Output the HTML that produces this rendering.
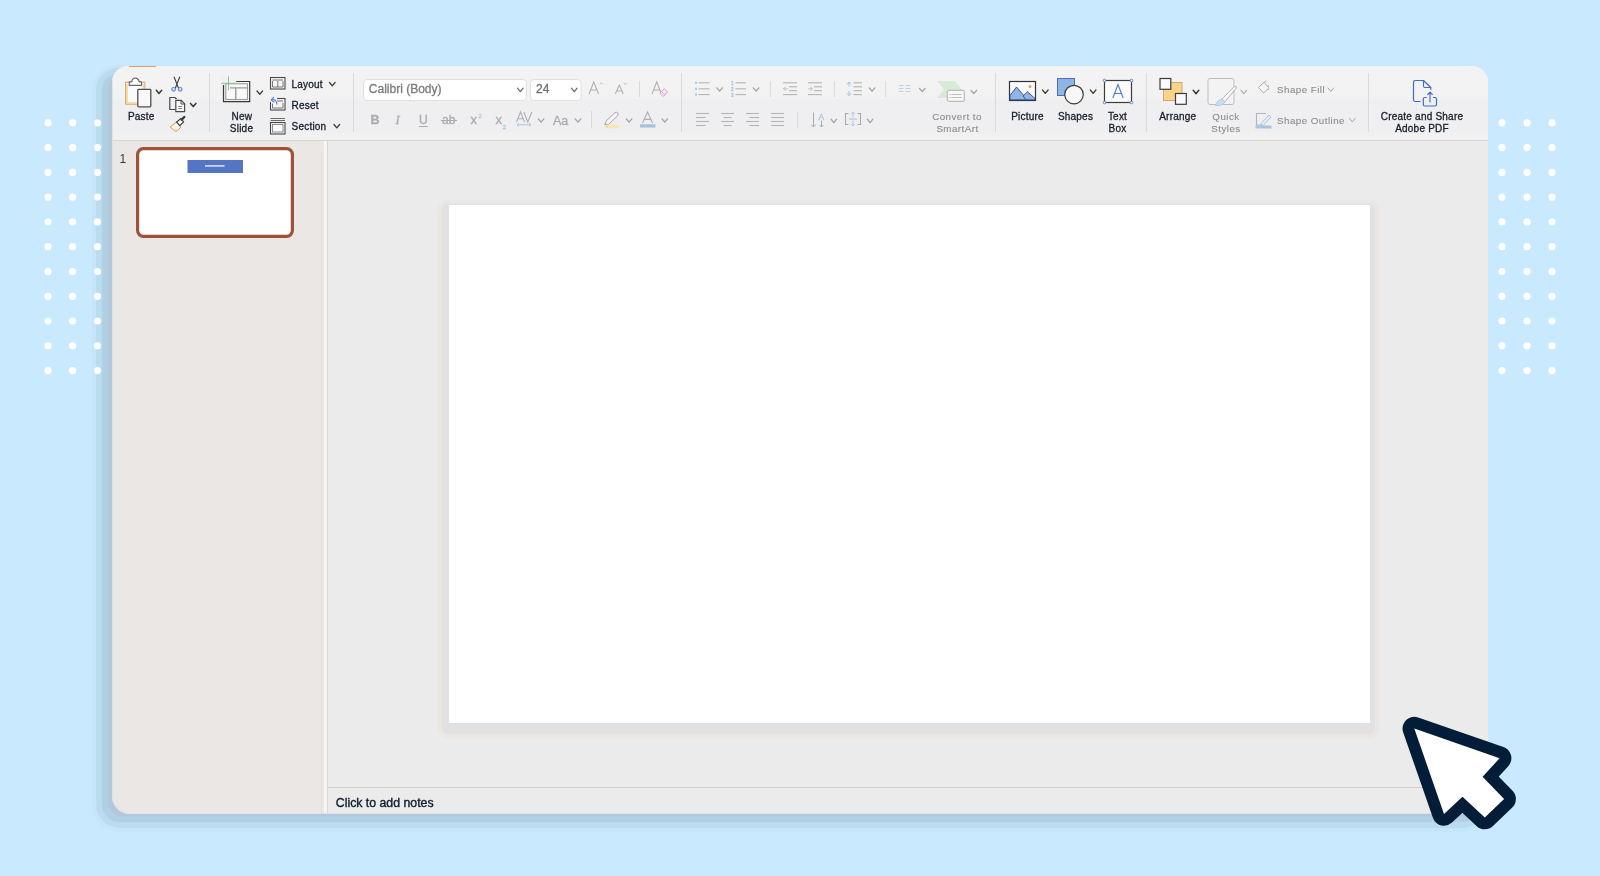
<!DOCTYPE html>
<html><head><meta charset="utf-8"><style>
*{margin:0;padding:0;box-sizing:border-box}
html,body{width:1600px;height:876px;overflow:hidden;background:#C9E9FE;font-family:"Liberation Sans",sans-serif}
#shadow{position:absolute;left:112px;top:66px;width:1376px;height:748px;border-radius:16px 16px 16px 18px;box-shadow:-8px 6px 0.8px -4px #B3C7D8,-10.25px 7.75px 0.8px -0.25px #B0D0E6,-9.5px 8px 0.8px 6px #BBDBEE,-10.75px 8.25px 1px 9.25px #C5E6FA}
#win{position:absolute;left:112px;top:66px;width:1376px;height:748px;border-radius:16px 16px 16px 18px;overflow:hidden;background:#EBEBEB}
#ribbon{position:absolute;left:0;top:0;width:1376px;height:75px;background:linear-gradient(#F3F3F3 0,#F2F2F2 33px,#EFEFF2 34px,#EFEFF2 66px,#F1F1F2 67px,#F1F1F2 100%);border-bottom:1px solid #D5D5D5}
#tabline{position:absolute;left:17px;top:0;width:27px;height:1px;background:#DCA270}
#left{position:absolute;left:0;top:75px;width:212px;height:673px;background:#EAE7E4}
#sepw{position:absolute;left:212px;top:75px;width:3px;height:673px;background:#F8F6F5}
#main{position:absolute;left:215px;top:75px;width:1161px;height:673px;background:#EBEBEB;border-left:1px solid #D6D6D6}
#slide{position:absolute;left:121px;top:64px;width:921px;height:518px;background:#fff}
#slsh{position:absolute;left:114px;top:62.5px;width:933px;height:530px;border-radius:6px;background:#E1E1E1;box-shadow:0 0 2px 3.5px #EAE6E3}
#edge{position:absolute;left:0;top:0;width:1376px;height:748px;border-radius:16px 16px 16px 18px;box-shadow:inset 1px -1px 0 #DDE3E9}
#notesline{position:absolute;left:0;top:646px;width:1161px;height:1px;background:#D3D0CD}
</style></head><body>
<div id="shadow"></div>
<svg class="full" width="1600" height="876" viewBox="0 0 1600 876" style="position:absolute;left:0;top:0"><circle cx="48" cy="122.8" r="3.6" fill="#fff"/><circle cx="48" cy="147.6" r="3.6" fill="#fff"/><circle cx="48" cy="172.4" r="3.6" fill="#fff"/><circle cx="48" cy="197.1" r="3.6" fill="#fff"/><circle cx="48" cy="221.9" r="3.6" fill="#fff"/><circle cx="48" cy="246.7" r="3.6" fill="#fff"/><circle cx="48" cy="271.5" r="3.6" fill="#fff"/><circle cx="48" cy="296.3" r="3.6" fill="#fff"/><circle cx="48" cy="321.0" r="3.6" fill="#fff"/><circle cx="48" cy="345.8" r="3.6" fill="#fff"/><circle cx="48" cy="370.6" r="3.6" fill="#fff"/><circle cx="72.6" cy="122.8" r="3.6" fill="#fff"/><circle cx="72.6" cy="147.6" r="3.6" fill="#fff"/><circle cx="72.6" cy="172.4" r="3.6" fill="#fff"/><circle cx="72.6" cy="197.1" r="3.6" fill="#fff"/><circle cx="72.6" cy="221.9" r="3.6" fill="#fff"/><circle cx="72.6" cy="246.7" r="3.6" fill="#fff"/><circle cx="72.6" cy="271.5" r="3.6" fill="#fff"/><circle cx="72.6" cy="296.3" r="3.6" fill="#fff"/><circle cx="72.6" cy="321.0" r="3.6" fill="#fff"/><circle cx="72.6" cy="345.8" r="3.6" fill="#fff"/><circle cx="72.6" cy="370.6" r="3.6" fill="#fff"/><circle cx="97.5" cy="122.8" r="3.6" fill="#fff"/><circle cx="97.5" cy="147.6" r="3.6" fill="#fff"/><circle cx="97.5" cy="172.4" r="3.6" fill="#fff"/><circle cx="97.5" cy="197.1" r="3.6" fill="#fff"/><circle cx="97.5" cy="221.9" r="3.6" fill="#fff"/><circle cx="97.5" cy="246.7" r="3.6" fill="#fff"/><circle cx="97.5" cy="271.5" r="3.6" fill="#fff"/><circle cx="97.5" cy="296.3" r="3.6" fill="#fff"/><circle cx="97.5" cy="321.0" r="3.6" fill="#fff"/><circle cx="97.5" cy="345.8" r="3.6" fill="#fff"/><circle cx="97.5" cy="370.6" r="3.6" fill="#fff"/><circle cx="1502" cy="122.8" r="3.6" fill="#fff"/><circle cx="1502" cy="147.6" r="3.6" fill="#fff"/><circle cx="1502" cy="172.4" r="3.6" fill="#fff"/><circle cx="1502" cy="197.1" r="3.6" fill="#fff"/><circle cx="1502" cy="221.9" r="3.6" fill="#fff"/><circle cx="1502" cy="246.7" r="3.6" fill="#fff"/><circle cx="1502" cy="271.5" r="3.6" fill="#fff"/><circle cx="1502" cy="296.3" r="3.6" fill="#fff"/><circle cx="1502" cy="321.0" r="3.6" fill="#fff"/><circle cx="1502" cy="345.8" r="3.6" fill="#fff"/><circle cx="1502" cy="370.6" r="3.6" fill="#fff"/><circle cx="1527" cy="122.8" r="3.6" fill="#fff"/><circle cx="1527" cy="147.6" r="3.6" fill="#fff"/><circle cx="1527" cy="172.4" r="3.6" fill="#fff"/><circle cx="1527" cy="197.1" r="3.6" fill="#fff"/><circle cx="1527" cy="221.9" r="3.6" fill="#fff"/><circle cx="1527" cy="246.7" r="3.6" fill="#fff"/><circle cx="1527" cy="271.5" r="3.6" fill="#fff"/><circle cx="1527" cy="296.3" r="3.6" fill="#fff"/><circle cx="1527" cy="321.0" r="3.6" fill="#fff"/><circle cx="1527" cy="345.8" r="3.6" fill="#fff"/><circle cx="1527" cy="370.6" r="3.6" fill="#fff"/><circle cx="1552" cy="122.8" r="3.6" fill="#fff"/><circle cx="1552" cy="147.6" r="3.6" fill="#fff"/><circle cx="1552" cy="172.4" r="3.6" fill="#fff"/><circle cx="1552" cy="197.1" r="3.6" fill="#fff"/><circle cx="1552" cy="221.9" r="3.6" fill="#fff"/><circle cx="1552" cy="246.7" r="3.6" fill="#fff"/><circle cx="1552" cy="271.5" r="3.6" fill="#fff"/><circle cx="1552" cy="296.3" r="3.6" fill="#fff"/><circle cx="1552" cy="321.0" r="3.6" fill="#fff"/><circle cx="1552" cy="345.8" r="3.6" fill="#fff"/><circle cx="1552" cy="370.6" r="3.6" fill="#fff"/></svg>
<div id="win">
  <div id="ribbon"><div id="tabline"></div></div>
  <div id="left"><div style="position:absolute;left:209px;top:10px;width:1px;height:663px;background:#E4E1DE"></div></div>
  <div id="sepw"></div>
  <div id="main">
    <div id="slsh"></div><div id="slide"></div>
    <div id="notesline"></div>
  </div>
  <div id="edge"></div>
</div>
<svg class="full" width="1600" height="876" viewBox="0 0 1600 876" style="position:absolute;left:0;top:0;font-family:'Liberation Sans',sans-serif;will-change:transform"><rect x="125.6" y="82.2" width="19.2" height="22" fill="#FAFAFA" stroke="#D9A070" stroke-width="1"/><path d="M127 84 V103 H137" fill="none" stroke="#F6D68E" stroke-width="1.6"/><path d="M143.4 84 V89" fill="none" stroke="#F6D68E" stroke-width="1.4"/><path d="M129.3 85.3 V81.8 H131.8 A3.6 3.6 0 0 1 139 81.8 H141.5 V85.3 Z" fill="#fff" stroke="#6a6a6a" stroke-width="1.2" stroke-linejoin="round"/><rect x="137.8" y="89.3" width="13" height="17.5" fill="#F8F8F8" stroke="#4f4f4f" stroke-width="1.3" rx="0.8"/><path d="M156.3 90.3 L159.0 93.5 L161.70000000000002 90.3" fill="none" stroke="#3a3a3a" stroke-width="1.5" stroke-linecap="round" stroke-linejoin="round"/><text x="141.3" y="119.6" font-size="10.0" fill="#161D29" text-anchor="middle" font-weight="normal" stroke="#161D29" stroke-width="0.3" letter-spacing="0.22" >Paste</text><path d="M174 76.7 L178.6 88.5 M179.8 76.7 L175.2 88.5" stroke="#3c3c3c" stroke-width="1.1" fill="none"/><circle cx="173.6" cy="89.3" r="1.8" fill="#D7E6F9" stroke="#5A8AD8" stroke-width="1.1"/><circle cx="180.2" cy="89.3" r="1.8" fill="#D7E6F9" stroke="#5A8AD8" stroke-width="1.1"/><path d="M175.5 109.5 H169.8 V97.5 H175 L176.5 99" fill="none" stroke="#4a4a4a" stroke-width="1.2"/><path d="M175.8 100.3 H181.2 L184.6 103.7 V111.6 H175.8 Z" fill="#fafafa" stroke="#4a4a4a" stroke-width="1.2"/><path d="M181 100.5 V104 H184.5" fill="none" stroke="#4a4a4a" stroke-width="1"/><path d="M178.3 106.5 H182.2 M178.3 108.6 H182.2" stroke="#777" stroke-width="0.9"/><path d="M190.5 103.4 L193.2 106.60000000000001 L195.9 103.4" fill="none" stroke="#3a3a3a" stroke-width="1.5" stroke-linecap="round" stroke-linejoin="round"/><path d="M170.2 127 L176.8 121.8 L180.8 127.2 L176 132 Z" fill="#FBF4E4" stroke="#D9925A" stroke-width="1" stroke-linejoin="round"/><path d="M173 129.5 L176 132 L178.8 129.2 Z" fill="#F6D68E"/><path d="M176.6 122.2 L180.6 118.6 L183.6 121.8 L179.8 125.6 Z" fill="#FAFAFA" stroke="#3a3a3a" stroke-width="1.2" stroke-linejoin="round"/><path d="M181.6 119.6 L184.3 117" stroke="#3a3a3a" stroke-width="2.4" stroke-linecap="round"/><line x1="209.5" y1="73" x2="209.5" y2="132" stroke="#DADADA" stroke-width="1"/><rect x="225.8" y="83.8" width="21.6" height="15.6" fill="#F8F8F8" stroke="#8a8a8a" stroke-width="0.9"/><path d="M230 87.9 H247.4 M235.8 88 V99.4" stroke="#9a9a9a" stroke-width="1.4" fill="none"/><path d="M236.2 81.5 H249.7 V101.6 H223.5 V85" fill="none" stroke="#3a3a3a" stroke-width="1.2"/><rect x="220" y="75" width="9" height="8" fill="#F1F1F1"/><path d="M228.5 76.4 V90.3 M221.2 83.3 H235.8" stroke="#8FBF9A" stroke-width="1"/><path d="M257 91 L259.8 94.4 L262.6 91" fill="none" stroke="#3a3a3a" stroke-width="1.25" stroke-linecap="round" stroke-linejoin="round"/><text x="241.8" y="120" font-size="10.0" fill="#161D29" text-anchor="middle" font-weight="normal" stroke="#161D29" stroke-width="0.3" letter-spacing="0.22" >New</text><text x="241.5" y="131.5" font-size="10.0" fill="#161D29" text-anchor="middle" font-weight="normal" stroke="#161D29" stroke-width="0.3" letter-spacing="0.22" >Slide</text><rect x="270.5" y="77.5" width="14.5" height="11.5" fill="#f4f4f4" stroke="#4a4a4a" stroke-width="1.1"/><path d="M272.5 80 H283 M272.5 81 V87 H283 V81 M277.8 81 V87" fill="none" stroke="#6a6a6a" stroke-width="0.9"/><text x="291.5" y="88" font-size="10.0" fill="#161D29" text-anchor="start" font-weight="normal" stroke="#161D29" stroke-width="0.3" letter-spacing="0.22" >Layout</text><path d="M329.5 82.5 L332.3 85.9 L335.1 82.5" fill="none" stroke="#3a3a3a" stroke-width="1.25" stroke-linecap="round" stroke-linejoin="round"/><rect x="270.5" y="98.5" width="14.5" height="11.5" fill="#f4f4f4" stroke="#4a4a4a" stroke-width="1.1"/><path d="M275 101 H283 M272.5 103.5 V108 H283 V103" fill="none" stroke="#6a6a6a" stroke-width="0.9"/><rect x="269" y="96" width="8" height="6" fill="#F1F1F3"/><path d="M271.5 100 Q276.5 98.5 277 104.5" fill="none" stroke="#5A8AD8" stroke-width="1.2"/><path d="M273.5 97.3 L271.2 100 L274 102" fill="none" stroke="#5A8AD8" stroke-width="1.2" stroke-linejoin="round" stroke-linecap="round"/><text x="291.5" y="108.7" font-size="10.0" fill="#161D29" text-anchor="start" font-weight="normal" stroke="#161D29" stroke-width="0.3" letter-spacing="0.22" >Reset</text><path d="M270.5 118.5 H285 M270.5 120.5 H285" stroke="#6a6a6a" stroke-width="1"/><rect x="270.5" y="122.5" width="14.5" height="11.5" fill="#f4f4f4" stroke="#4a4a4a" stroke-width="1.1"/><rect x="272.5" y="124.5" width="10.5" height="7.5" fill="#fbfbfb" stroke="#777" stroke-width="0.8"/><text x="291.5" y="129.8" font-size="10.0" fill="#161D29" text-anchor="start" font-weight="normal" stroke="#161D29" stroke-width="0.3" letter-spacing="0.22" >Section</text><path d="M334 124.5 L336.8 127.9 L339.6 124.5" fill="none" stroke="#3a3a3a" stroke-width="1.25" stroke-linecap="round" stroke-linejoin="round"/><line x1="353.5" y1="73" x2="353.5" y2="132" stroke="#DADADA" stroke-width="1"/><rect x="363.5" y="79.5" width="163" height="21" rx="3.5" fill="#fff" stroke="#E0E0E0" stroke-width="1"/><text x="368.8" y="92.8" font-size="12" fill="#7B7B7B" text-anchor="start" font-weight="normal" stroke="#7B7B7B" stroke-width="0.3" >Calibri (Body)</text><path d="M517.5 88.2 L520.3 91.60000000000001 L523.1 88.2" fill="none" stroke="#6a6a6a" stroke-width="1.25" stroke-linecap="round" stroke-linejoin="round"/><rect x="530.5" y="79.5" width="50.5" height="21" rx="3.5" fill="#fff" stroke="#E0E0E0" stroke-width="1"/><text x="536" y="93" font-size="12" fill="#6f6f6f" text-anchor="start" font-weight="normal" stroke="#6f6f6f" stroke-width="0.3" >24</text><path d="M571.5 88.2 L574.3 91.60000000000001 L577.1 88.2" fill="none" stroke="#6a6a6a" stroke-width="1.25" stroke-linecap="round" stroke-linejoin="round"/><path d="M589 94 L593.75 82 L598.5 94 M590.9 90.04 H596.6" fill="none" stroke="#AFAFAF" stroke-width="1.05" stroke-linejoin="miter"/><path d="M599.6 84.6 L601.4 82.6 L603.2 84.6" fill="none" stroke="#BDBDBD" stroke-width="0.9"/><path d="M615.3 94 L619.3 85 L623.3 94 M616.9 91.03 H621.6999999999999" fill="none" stroke="#AFAFAF" stroke-width="1.05" stroke-linejoin="miter"/><path d="M623.8 82.8 L625.4 84.6 L627 82.8" fill="none" stroke="#A7C3E6" stroke-width="0.9"/><line x1="639.5" y1="81" x2="639.5" y2="97" stroke="#DADADA" stroke-width="1"/><path d="M652 94 L656.75 82 L661.5 94 M653.9 90.04 H659.6" fill="none" stroke="#AFAFAF" stroke-width="1.05" stroke-linejoin="miter"/><path d="M659.8 93.2 L664.3 88.7 L667.6 92 L663.1 96.5 Z" fill="#F5E6F3" stroke="#CFA6D4" stroke-width="1"/><path d="M661.5 91.5 L665.3 95.3" stroke="#CFA6D4" stroke-width="0.8"/><text x="370.5" y="124.3" font-size="12.5" fill="#ABABAB" text-anchor="start" font-weight="bold" stroke="#ABABAB" stroke-width="0.3" >B</text><text x="395.5" y="124.3" font-size="12.5" fill="#ABABAB" text-anchor="start" font-weight="normal" stroke="#ABABAB" stroke-width="0.3" font-style="italic" font-family="Liberation Serif">I</text><text x="419" y="123.8" font-size="12" fill="#ABABAB" text-anchor="start" font-weight="normal" stroke="#ABABAB" stroke-width="0.3" >U</text><line x1="419" y1="126.5" x2="428" y2="126.5" stroke="#ABABAB" stroke-width="1"/><text x="442" y="124.3" font-size="12" fill="#ABABAB" text-anchor="start" font-weight="normal" stroke="#ABABAB" stroke-width="0.3" >ab</text><line x1="441" y1="120.5" x2="457" y2="120.5" stroke="#ABABAB" stroke-width="1"/><text x="470.5" y="124.3" font-size="13" fill="#ABABAB" text-anchor="start" font-weight="normal" stroke="#ABABAB" stroke-width="0.3" >x</text><text x="478.5" y="117.5" font-size="6" fill="#C8C8C8" text-anchor="start" font-weight="normal" stroke="#C8C8C8" stroke-width="0.3" >2</text><text x="495.5" y="124.3" font-size="13" fill="#ABABAB" text-anchor="start" font-weight="normal" stroke="#ABABAB" stroke-width="0.3" >x</text><text x="502.8" y="128.5" font-size="6" fill="#A7C3E6" text-anchor="start" font-weight="normal" stroke="#A7C3E6" stroke-width="0.3" >2</text><path d="M516.5 122 L520.5 112 L524.5 122 M518.1 118.7 H522.9" fill="none" stroke="#AFAFAF" stroke-width="1.05" stroke-linejoin="miter"/><path d="M523.8 112 L527.8 122 L531.8 112" fill="none" stroke="#AFAFAF" stroke-width="1.05"/><path d="M517 124.8 H531 M517 124.8 L519 123 M517 124.8 L519 126.6 M531 124.8 L529 123 M531 124.8 L529 126.6" fill="none" stroke="#A7C3E6" stroke-width="0.9"/><path d="M538.3 118.8 L541.0999999999999 122.2 L543.9 118.8" fill="none" stroke="#A0A0A0" stroke-width="1.25" stroke-linecap="round" stroke-linejoin="round"/><text x="553" y="124.5" font-size="12.5" fill="#ABABAB" text-anchor="start" font-weight="normal" stroke="#ABABAB" stroke-width="0.3" >Aa</text><path d="M575.2 118.8 L578.0 122.2 L580.8000000000001 118.8" fill="none" stroke="#A0A0A0" stroke-width="1.25" stroke-linecap="round" stroke-linejoin="round"/><line x1="591.5" y1="111" x2="591.5" y2="128" stroke="#DADADA" stroke-width="1"/><path d="M604.8 124.5 L606.2 121 L614.8 112.8 Q616.6 111.6 617.8 113 Q618.6 114.6 617.4 116 L608.8 124.2 Z" fill="#F6F6F6" stroke="#A5A5A5" stroke-width="1" stroke-linejoin="round"/><ellipse cx="611.8" cy="126.4" rx="8.2" ry="2" fill="#F6E6B8"/><rect x="606.5" y="126.3" width="1" height="1" fill="#E6B24A"/><path d="M626.3 118.8 L629.0999999999999 122.2 L631.9 118.8" fill="none" stroke="#A0A0A0" stroke-width="1.25" stroke-linecap="round" stroke-linejoin="round"/><path d="M642.5 123 L647.5 112 L652.5 123 M644.5 119.37 H650.5" fill="none" stroke="#AFAFAF" stroke-width="1.05" stroke-linejoin="miter"/><rect x="640" y="124.3" width="15.5" height="3.2" fill="#A5C0DC"/><path d="M662 118.8 L664.8 122.2 L667.6 118.8" fill="none" stroke="#A0A0A0" stroke-width="1.25" stroke-linecap="round" stroke-linejoin="round"/><line x1="681.5" y1="73" x2="681.5" y2="132" stroke="#DADADA" stroke-width="1"/><rect x="695" y="81.8" width="2" height="2" fill="#A7C3E6"/><rect x="695" y="87.8" width="2" height="2" fill="#A7C3E6"/><rect x="695" y="93.6" width="2" height="2" fill="#A7C3E6"/><line x1="698.5" y1="82.8" x2="709.5" y2="82.8" stroke="#B5B5B5" stroke-width="1.1"/><line x1="698.5" y1="88.8" x2="709.5" y2="88.8" stroke="#B5B5B5" stroke-width="1.1"/><line x1="698.5" y1="94.6" x2="709.5" y2="94.6" stroke="#B5B5B5" stroke-width="1.1"/><path d="M716.8 87.8 L719.5999999999999 91.2 L722.4 87.8" fill="none" stroke="#A0A0A0" stroke-width="1.25" stroke-linecap="round" stroke-linejoin="round"/><text x="731" y="85" font-size="4.5" fill="#A7C3E6" text-anchor="start" font-weight="normal" stroke="#A7C3E6" stroke-width="0.3" >1</text><text x="731" y="91" font-size="4.5" fill="#A7C3E6" text-anchor="start" font-weight="normal" stroke="#A7C3E6" stroke-width="0.3" >2</text><text x="731" y="96.5" font-size="4.5" fill="#A7C3E6" text-anchor="start" font-weight="normal" stroke="#A7C3E6" stroke-width="0.3" >3</text><line x1="735.5" y1="82.8" x2="746.0" y2="82.8" stroke="#B5B5B5" stroke-width="1.1"/><line x1="735.5" y1="88.8" x2="746.0" y2="88.8" stroke="#B5B5B5" stroke-width="1.1"/><line x1="735.5" y1="94.6" x2="746.0" y2="94.6" stroke="#B5B5B5" stroke-width="1.1"/><path d="M753.3 87.8 L756.0999999999999 91.2 L758.9 87.8" fill="none" stroke="#A0A0A0" stroke-width="1.25" stroke-linecap="round" stroke-linejoin="round"/><line x1="770.5" y1="81" x2="770.5" y2="97" stroke="#DADADA" stroke-width="1"/><line x1="783" y1="82.8" x2="797" y2="82.8" stroke="#B5B5B5" stroke-width="1.1"/><line x1="783" y1="94.6" x2="797" y2="94.6" stroke="#B5B5B5" stroke-width="1.1"/><line x1="789" y1="86.8" x2="797" y2="86.8" stroke="#B5B5B5" stroke-width="1.1"/><line x1="789" y1="90.7" x2="797" y2="90.7" stroke="#B5B5B5" stroke-width="1.1"/><path d="M788 88.8 H783.5 M785.5 86.8 L783.5 88.8 L785.5 90.8" fill="none" stroke="#A7C3E6" stroke-width="1"/><line x1="808" y1="82.8" x2="822" y2="82.8" stroke="#B5B5B5" stroke-width="1.1"/><line x1="808" y1="94.6" x2="822" y2="94.6" stroke="#B5B5B5" stroke-width="1.1"/><line x1="814" y1="86.8" x2="822" y2="86.8" stroke="#B5B5B5" stroke-width="1.1"/><line x1="814" y1="90.7" x2="822" y2="90.7" stroke="#B5B5B5" stroke-width="1.1"/><path d="M808 88.8 H812.5 M810.5 86.8 L812.5 88.8 L810.5 90.8" fill="none" stroke="#A7C3E6" stroke-width="1"/><line x1="834.5" y1="81" x2="834.5" y2="97" stroke="#DADADA" stroke-width="1"/><path d="M849 82 V86.5 M846.8 84.3 L849 82 L851.2 84.3 M849 91 V95.5 M846.8 93.2 L849 95.5 L851.2 93.2" fill="none" stroke="#A7C3E6" stroke-width="1"/><line x1="853.5" y1="82.8" x2="862.0" y2="82.8" stroke="#B5B5B5" stroke-width="1.1"/><line x1="853.5" y1="86.8" x2="862.0" y2="86.8" stroke="#B5B5B5" stroke-width="1.1"/><line x1="853.5" y1="90.7" x2="862.0" y2="90.7" stroke="#B5B5B5" stroke-width="1.1"/><line x1="853.5" y1="94.6" x2="862.0" y2="94.6" stroke="#B5B5B5" stroke-width="1.1"/><path d="M869.3 87.8 L872.0999999999999 91.2 L874.9 87.8" fill="none" stroke="#A0A0A0" stroke-width="1.25" stroke-linecap="round" stroke-linejoin="round"/><line x1="885.5" y1="81" x2="885.5" y2="97" stroke="#DADADA" stroke-width="1"/><line x1="899" y1="85.5" x2="903.5" y2="85.5" stroke="#B9CDE8" stroke-width="0.9"/><line x1="899" y1="88.5" x2="903.5" y2="88.5" stroke="#B9CDE8" stroke-width="0.9"/><line x1="899" y1="91.5" x2="903.5" y2="91.5" stroke="#B9CDE8" stroke-width="0.9"/><line x1="905.5" y1="85.5" x2="910.5" y2="85.5" stroke="#B9CDE8" stroke-width="0.9"/><line x1="905.5" y1="88.5" x2="910.5" y2="88.5" stroke="#B9CDE8" stroke-width="0.9"/><line x1="905.5" y1="91.5" x2="910.5" y2="91.5" stroke="#B9CDE8" stroke-width="0.9"/><path d="M919.5 88.3 L922.3 91.7 L925.1 88.3" fill="none" stroke="#A0A0A0" stroke-width="1.25" stroke-linecap="round" stroke-linejoin="round"/><path d="M937 81 H955 L962 90 L955 98 H937 L944 89.5 Z" fill="#D7EBD7"/><rect x="947.3" y="90.3" width="17" height="11" rx="1.2" fill="#F7F7F7" stroke="#B0B0B0" stroke-width="1"/><path d="M951.5 94.5 H961.5 M951.5 97.5 H961.5" stroke="#B5B5B5" stroke-width="0.9"/><rect x="949.6" y="94" width="1" height="1" fill="#B5B5B5"/><rect x="949.6" y="97" width="1" height="1" fill="#B5B5B5"/><path d="M971 90.3 L973.8 93.7 L976.6 90.3" fill="none" stroke="#A0A0A0" stroke-width="1.25" stroke-linecap="round" stroke-linejoin="round"/><text x="957" y="120" font-size="9.8" fill="#8B8B8B" text-anchor="middle" font-weight="normal" stroke="#8B8B8B" stroke-width="0.1" letter-spacing="0.45" >Convert to</text><text x="957.5" y="131.5" font-size="9.8" fill="#8B8B8B" text-anchor="middle" font-weight="normal" stroke="#8B8B8B" stroke-width="0.1" letter-spacing="0.45" >SmartArt</text><line x1="696" y1="113.5" x2="709" y2="113.5" stroke="#B5B5B5" stroke-width="1.1"/><line x1="696" y1="121.5" x2="709" y2="121.5" stroke="#B5B5B5" stroke-width="1.1"/><line x1="696" y1="117.5" x2="705.5" y2="117.5" stroke="#B5B5B5" stroke-width="1.1"/><line x1="696" y1="125.5" x2="705.5" y2="125.5" stroke="#B5B5B5" stroke-width="1.1"/><line x1="721" y1="113.5" x2="734" y2="113.5" stroke="#B5B5B5" stroke-width="1.1"/><line x1="721" y1="121.5" x2="734" y2="121.5" stroke="#B5B5B5" stroke-width="1.1"/><line x1="723.5" y1="117.5" x2="731.5" y2="117.5" stroke="#B5B5B5" stroke-width="1.1"/><line x1="723.5" y1="125.5" x2="731.5" y2="125.5" stroke="#B5B5B5" stroke-width="1.1"/><line x1="746" y1="113.5" x2="759" y2="113.5" stroke="#B5B5B5" stroke-width="1.1"/><line x1="746" y1="121.5" x2="759" y2="121.5" stroke="#B5B5B5" stroke-width="1.1"/><line x1="749.5" y1="117.5" x2="759.0" y2="117.5" stroke="#B5B5B5" stroke-width="1.1"/><line x1="749.5" y1="125.5" x2="759.0" y2="125.5" stroke="#B5B5B5" stroke-width="1.1"/><line x1="771" y1="113.5" x2="784" y2="113.5" stroke="#B5B5B5" stroke-width="1.1"/><line x1="771" y1="117.5" x2="784" y2="117.5" stroke="#B5B5B5" stroke-width="1.1"/><line x1="771" y1="121.5" x2="784" y2="121.5" stroke="#B5B5B5" stroke-width="1.1"/><line x1="771" y1="125.5" x2="784" y2="125.5" stroke="#B5B5B5" stroke-width="1.1"/><line x1="797.5" y1="112" x2="797.5" y2="128" stroke="#DADADA" stroke-width="1"/><path d="M813.5 112.5 V127 M811.3 124.5 L813.5 127 L815.7 124.5" fill="none" stroke="#ABABAB" stroke-width="1"/><text x="818.5" y="120" font-size="8.5" fill="#A7C3E6" text-anchor="start" font-weight="normal" stroke="#A7C3E6" stroke-width="0.3" >A</text><path d="M821.5 120.5 V127 M819.5 125 L821.5 127 L823.5 125" fill="none" stroke="#ABABAB" stroke-width="1"/><path d="M831 119.2 L833.8 122.60000000000001 L836.6 119.2" fill="none" stroke="#A0A0A0" stroke-width="1.25" stroke-linecap="round" stroke-linejoin="round"/><path d="M848.5 113.5 H845.5 V124.5 H848.5 M857.5 113.5 H860.5 V124.5 H857.5" fill="none" stroke="#ABABAB" stroke-width="1.1"/><path d="M849 119 H857" stroke="#B5B5B5" stroke-width="0.9"/><path d="M853 112 V117.5 M851.3 113.8 L853 112 L854.7 113.8 M853 120.5 V126 M851.3 124.2 L853 126 L854.7 124.2" fill="none" stroke="#A7C3E6" stroke-width="0.9"/><path d="M867.3 119.2 L870.0999999999999 122.60000000000001 L872.9 119.2" fill="none" stroke="#A0A0A0" stroke-width="1.25" stroke-linecap="round" stroke-linejoin="round"/><line x1="995.5" y1="73" x2="995.5" y2="132" stroke="#DADADA" stroke-width="1"/><rect x="1009.5" y="81.5" width="26" height="19" fill="#FBFBFB" stroke="#2F3440" stroke-width="1.2"/><path d="M1010 99.8 V95.5 L1016.5 87 L1027.5 99.8 Z" fill="#8FB4E8" stroke="#2F4A85" stroke-width="0.9" stroke-linejoin="round"/><path d="M1023 96 L1027.5 91.8 L1035 98.5 V99.8 H1026 Z" fill="#8FB4E8" stroke="#2F4A85" stroke-width="0.9" stroke-linejoin="round"/><circle cx="1030" cy="86.6" r="1.5" fill="#F0A060"/><path d="M1042.5 90 L1045.3 93.4 L1048.1 90" fill="none" stroke="#3a3a3a" stroke-width="1.25" stroke-linecap="round" stroke-linejoin="round"/><text x="1027.5" y="120" font-size="10.0" fill="#161D29" text-anchor="middle" font-weight="normal" stroke="#161D29" stroke-width="0.3" letter-spacing="0.22" >Picture</text><rect x="1057.5" y="78.5" width="17" height="17" fill="#8FB4E8" stroke="#3E64B8" stroke-width="0.9"/><circle cx="1074" cy="94.6" r="9.3" fill="#F7F7F7" stroke="#3c3c3c" stroke-width="1.2"/><path d="M1090.3 90 L1093.1 93.4 L1095.8999999999999 90" fill="none" stroke="#3a3a3a" stroke-width="1.25" stroke-linecap="round" stroke-linejoin="round"/><text x="1075.5" y="120" font-size="10.0" fill="#161D29" text-anchor="middle" font-weight="normal" stroke="#161D29" stroke-width="0.3" letter-spacing="0.22" >Shapes</text><rect x="1104.5" y="80.5" width="27" height="22" fill="#FBFBFB" stroke="#3c3c3c" stroke-width="1.2"/><path d="M1112.8 98 L1118 84.5 L1123.2 98 M1114.6 93.5 H1121.4" fill="none" stroke="#4A7BD0" stroke-width="1.1"/><circle cx="1104.5" cy="80.5" r="1.3" fill="#fff" stroke="#4A7BD0" stroke-width="0.9"/><circle cx="1104.5" cy="102.5" r="1.3" fill="#fff" stroke="#4A7BD0" stroke-width="0.9"/><circle cx="1131.5" cy="80.5" r="1.3" fill="#fff" stroke="#4A7BD0" stroke-width="0.9"/><circle cx="1131.5" cy="102.5" r="1.3" fill="#fff" stroke="#4A7BD0" stroke-width="0.9"/><text x="1117.5" y="120" font-size="10.0" fill="#161D29" text-anchor="middle" font-weight="normal" stroke="#161D29" stroke-width="0.3" letter-spacing="0.22" >Text</text><text x="1117.5" y="131.5" font-size="10.0" fill="#161D29" text-anchor="middle" font-weight="normal" stroke="#161D29" stroke-width="0.3" letter-spacing="0.22" >Box</text><line x1="1146.5" y1="73" x2="1146.5" y2="132" stroke="#DADADA" stroke-width="1"/><rect x="1163.5" y="82.5" width="18.5" height="18" fill="#F6D48A" stroke="#D9A57A" stroke-width="1"/><rect x="1160" y="78.5" width="10.8" height="10.8" fill="#FAFAFA" stroke="#3c3c3c" stroke-width="1.2"/><rect x="1175.5" y="93.5" width="10.8" height="10.8" fill="#FAFAFA" stroke="#3c3c3c" stroke-width="1.2"/><path d="M1193.2 90.3 L1196.0 93.7 L1198.8 90.3" fill="none" stroke="#3a3a3a" stroke-width="1.5" stroke-linecap="round" stroke-linejoin="round"/><text x="1177.8" y="120" font-size="10.0" fill="#161D29" text-anchor="middle" font-weight="normal" stroke="#161D29" stroke-width="0.3" letter-spacing="0.22" >Arrange</text><rect x="1208" y="78.5" width="26" height="26" rx="2" fill="#F3F3F3" stroke="#BDBDBD" stroke-width="1"/><path d="M1221.5 99.5 L1234 86.8 Q1236.8 85.2 1236.2 88.2 L1225 101.8 Z" fill="#F6F6F6" stroke="#B5B5B5" stroke-width="1" stroke-linejoin="round"/><path d="M1215.5 105.5 Q1217.5 99.5 1221.5 99 L1225 101.8 Q1223 106 1215.5 105.5 Z" fill="#C9DDF2" stroke="#A9C6E8" stroke-width="0.9"/><path d="M1241 90.3 L1243.8 93.7 L1246.6 90.3" fill="none" stroke="#B0B0B0" stroke-width="1.25" stroke-linecap="round" stroke-linejoin="round"/><text x="1226" y="120" font-size="9.8" fill="#8B8B8B" text-anchor="middle" font-weight="normal" stroke="#8B8B8B" stroke-width="0.1" letter-spacing="0.45" >Quick</text><text x="1226" y="131.5" font-size="9.8" fill="#8B8B8B" text-anchor="middle" font-weight="normal" stroke="#8B8B8B" stroke-width="0.1" letter-spacing="0.45" >Styles</text><path d="M1258.5 87.5 L1264 82.3 L1269 88 L1263.5 93 Z" fill="#F6F6F6" stroke="#ABABAB" stroke-width="1" stroke-linejoin="round"/><path d="M1264 82.3 Q1265.5 80 1266.5 82" fill="none" stroke="#ABABAB" stroke-width="0.9"/><path d="M1268.5 85 V90" stroke="#A7C3E6" stroke-width="1"/><text x="1277" y="93" font-size="9.8" fill="#8B8B8B" text-anchor="start" font-weight="normal" stroke="#8B8B8B" stroke-width="0.1" letter-spacing="0.45" >Shape Fill</text><path d="M1328 88 L1330.8 91.4 L1333.6 88" fill="none" stroke="#A5A5A5" stroke-width="1" stroke-linecap="round" stroke-linejoin="round"/><path d="M1266 113.5 H1256.5 V125 H1262" fill="none" stroke="#B5B5B5" stroke-width="1.1"/><path d="M1261.5 123 L1269 115 L1271 117 L1263.5 125 L1261 125.5 Z" fill="#E6EEF8" stroke="#9FC0E8" stroke-width="0.9"/><rect x="1255.5" y="125.5" width="16" height="3" fill="#A9C4DF"/><text x="1277" y="124" font-size="9.8" fill="#8B8B8B" text-anchor="start" font-weight="normal" stroke="#8B8B8B" stroke-width="0.1" letter-spacing="0.45" >Shape Outline</text><path d="M1349.5 118.5 L1352.3 121.9 L1355.1 118.5" fill="none" stroke="#A5A5A5" stroke-width="1" stroke-linecap="round" stroke-linejoin="round"/><line x1="1368.5" y1="73" x2="1368.5" y2="132" stroke="#DADADA" stroke-width="1"/><path d="M1420.5 101.5 H1415.3 Q1413.5 101.5 1413.5 99.7 V82.3 Q1413.5 80.5 1415.3 80.5 H1423.5 L1430.8 87.5 V89.8" fill="none" stroke="#3E6CC8" stroke-width="1.2" stroke-linejoin="round"/><path d="M1423.5 80.5 V86 Q1423.5 87.5 1425 87.5 H1430.8" fill="none" stroke="#3E6CC8" stroke-width="1.1"/><path d="M1426.8 97.5 H1424.8 Q1423.3 97.5 1423.3 99 V104.5 Q1423.3 106 1424.8 106 H1435 Q1436.5 106 1436.5 104.5 V99 Q1436.5 97.5 1435 97.5 H1433" fill="none" stroke="#3E6CC8" stroke-width="1.2" stroke-linejoin="round"/><path d="M1430 102 V92.3 M1427.7 94.5 L1430 92.2 L1432.3 94.5" fill="none" stroke="#3E6CC8" stroke-width="1.1" stroke-linecap="round" stroke-linejoin="round"/><text x="1422" y="120" font-size="10.0" fill="#161D29" text-anchor="middle" font-weight="normal" stroke="#161D29" stroke-width="0.3" letter-spacing="0.22" >Create and Share</text><text x="1422" y="131.5" font-size="10.0" fill="#161D29" text-anchor="middle" font-weight="normal" stroke="#161D29" stroke-width="0.3" letter-spacing="0.22" >Adobe PDF</text><rect x="137.6" y="148.6" width="154.8" height="87.8" rx="5.8" fill="#fff" stroke="#A1503A" stroke-width="3.2"/><rect x="187.5" y="160" width="55.5" height="13" fill="#5574C4"/><rect x="205" y="165" width="19.5" height="1.8" fill="#C9D5EE"/><text x="119.5" y="163" font-size="12" fill="#3a3a3a" text-anchor="start" font-weight="normal" >1</text><text x="335.8" y="806.7" font-size="12.3" fill="#0E1A2B" text-anchor="start" font-weight="normal" stroke="#0E1A2B" stroke-width="0.35" >Click to add notes</text><path d="M1414.3 728.6 L1499.6 758.2 L1482.6 776.8 L1504.1 799 L1484.8 817.6 L1462.5 796.8 L1444 813.9 Z" fill="#041E39" stroke="#031D38" stroke-width="23.5" stroke-linejoin="round"/><path d="M1414.3 728.6 L1499.6 758.2 L1482.6 776.8 L1504.1 799 L1484.8 817.6 L1462.5 796.8 L1444 813.9 Z" fill="#fff"/></svg>
</body></html>
